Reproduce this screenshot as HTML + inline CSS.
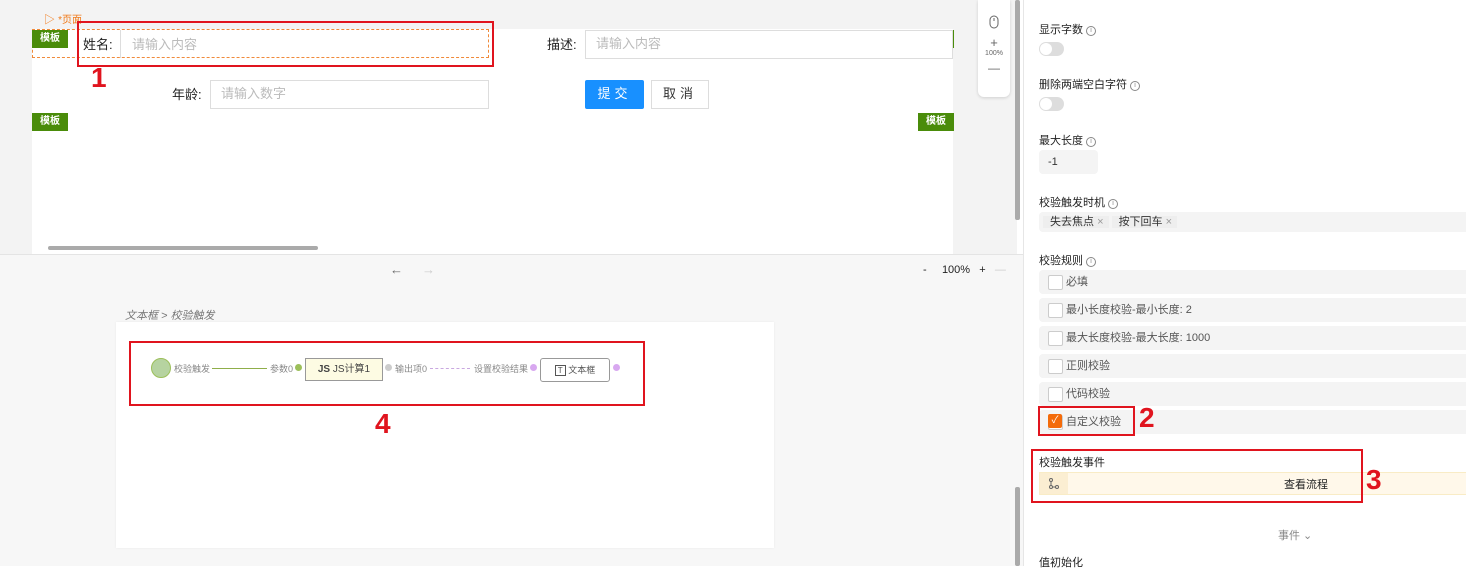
<!DOCTYPE html><html><head><meta charset="utf-8"><style>
*{box-sizing:border-box;margin:0;padding:0}
body{width:1466px;height:566px;overflow:hidden;position:relative;background:#fff;font-family:"Liberation Sans","Noto Sans CJK SC",sans-serif;font-size:12px;color:#333}
.a{position:absolute}
.tag{position:absolute;background:#4a8c0a;color:#fff;font-size:10px;font-weight:bold;width:36px;height:18px;line-height:18px;text-align:center}
.inp{position:absolute;border:1px solid #ddd;background:#fff;color:#bbb;font-size:13px;padding-left:10px;line-height:25px;height:29px}
.red{position:absolute;border:2px solid #e0141e}
.num{position:absolute;color:#e0141e;font-weight:bold;font-size:28px}
.lbl{position:absolute;left:1039px;font-size:11px;color:#222}
.i{display:inline-block;width:10px;height:10px;border:1px solid #888;border-radius:50%;font-size:7px;line-height:8px;text-align:center;color:#888;margin-left:3px;vertical-align:1px}
.sw{position:absolute;left:1039px;width:25px;height:14px;border-radius:7px;background:#ddd}
.sw:after{content:"";position:absolute;left:1px;top:1px;width:12px;height:12px;border-radius:50%;background:#fff}
.row{position:absolute;left:1039px;right:0;height:24px;background:#f4f4f4;border-radius:4px 0 0 4px;font-size:11px;color:#555;line-height:24px;padding-left:27px}
.row:before{content:"";position:absolute;left:9px;top:5px;width:13px;height:13px;border:1px solid #ccc;background:#fff;border-radius:2px}
</style></head><body>
<div class="a" style="left:0;top:0;width:1017px;height:255px;background:#f3f3f3"></div>
<div class="a" style="left:32px;top:29px;width:921px;height:226px;background:#fff"></div>
<div class="a" style="left:44px;top:11px;color:#f07a1a;font-size:11px">▷ <span style="font-size:10px">*页面</span></div>
<div class="a" style="left:32px;top:29px;width:457px;height:29px;border:1px dashed #f08a3a"></div>
<div class="tag" style="left:32px;top:30px">模板</div>
<div class="tag" style="left:918px;top:30px">模板</div>
<div class="tag" style="left:32px;top:113px">模板</div>
<div class="tag" style="left:918px;top:113px">模板</div>
<div class="a" style="left:83px;top:34px;font-size:13px;color:#222">姓名:</div>
<div class="a" style="left:120px;top:30px;width:1px;height:28px;background:#ddd"></div>
<div class="a" style="left:132px;top:34px;font-size:13px;color:#bbb">请输入内容</div>
<div class="a" style="left:547px;top:34px;font-size:13px;color:#222">描述:</div>
<div class="inp" style="left:585px;top:30px;width:368px">请输入内容</div>
<div class="a" style="left:172px;top:84px;font-size:13px;color:#222">年龄:</div>
<div class="inp" style="left:210px;top:80px;width:279px">请输入数字</div>
<div class="a" style="left:585px;top:80px;width:59px;height:29px;background:#1890ff;color:#fff;font-size:13px;text-align:center;line-height:27px;border-radius:2px;letter-spacing:4px">提交</div>
<div class="a" style="left:651px;top:80px;width:58px;height:29px;border:1px solid #ddd;background:#fff;font-size:13px;text-align:center;line-height:25px;letter-spacing:4px">取消</div>
<div class="red" style="left:77px;top:21px;width:417px;height:46px"></div>
<div class="num" style="left:91px;top:62px">1</div>
<div class="a" style="left:978px;top:0;width:32px;height:97px;background:#fff;border-radius:0 0 6px 6px;box-shadow:0 1px 3px rgba(0,0,0,.15);text-align:center;color:#666">
<svg width="10" height="14" style="margin-top:15px" viewBox="0 0 10 14"><rect x="1" y="1" width="8" height="12" rx="4" fill="none" stroke="#666"/><line x1="5" y1="3" x2="5" y2="6" stroke="#666"/></svg>
<div style="font-size:13px;margin-top:4px;line-height:14px">+</div><div style="font-size:7px">100%</div><div style="font-size:12px;margin-top:4px">—</div></div>
<div class="a" style="left:48px;top:246px;width:270px;height:4px;border-radius:2px;background:#aaa"></div>
<div class="a" style="left:1015px;top:0;width:5px;height:220px;background:#aaa;border-radius:2px"></div>
<div class="a" style="left:0;top:254px;width:1023px;height:312px;background:#f7f7f7;border-top:1px solid #e4e4e4"></div>
<div class="a" style="left:390px;top:262px;color:#666;font-size:13px">←</div>
<div class="a" style="left:422px;top:262px;color:#ccc;font-size:13px">→</div>
<div class="a" style="left:923px;top:264px;font-size:11px;color:#222">-&nbsp;&nbsp;&nbsp;&nbsp;&nbsp;100%&nbsp;&nbsp;&nbsp;+&nbsp;&nbsp;&nbsp;<span style="color:#ccc">—</span></div>
<div class="a" style="left:1015px;top:487px;width:5px;height:79px;background:#aaa;border-radius:2px"></div>
<div class="a" style="left:1023px;top:0;width:1px;height:566px;background:#e6e6e6"></div>
<div class="a" style="left:125px;top:307px;font-size:11px;color:#777;font-style:italic">文本框 &gt; 校验触发</div>
<div class="a" style="left:116px;top:322px;width:658px;height:226px;background:#fff;box-shadow:0 0 2px rgba(0,0,0,.06)"></div>
<div class="a" style="left:151px;top:358px;width:20px;height:20px;border-radius:50%;background:#b6d3a0;border:1.5px solid #9cbf5a"></div>
<div class="a" style="left:174px;top:362px;font-size:9px;color:#888">校验触发</div>
<div class="a" style="left:212px;top:368px;width:55px;height:1px;background:#8fae4a"></div>
<div class="a" style="left:270px;top:362px;font-size:9px;color:#888">参数0</div>
<div class="a" style="left:295px;top:364px;width:7px;height:7px;border-radius:50%;background:#9cbf5a"></div>
<div class="a" style="left:305px;top:358px;width:78px;height:23px;background:#fdfbe3;border:1px solid #999;font-size:10px;line-height:21px;text-align:center;color:#444"><b>JS</b> JS计算1</div>
<div class="a" style="left:385px;top:364px;width:7px;height:7px;border-radius:50%;background:#ccc"></div>
<div class="a" style="left:395px;top:362px;font-size:9px;color:#888">输出项0</div>
<div class="a" style="left:430px;top:368px;width:40px;border-top:1px dashed #c9a8e0"></div>
<div class="a" style="left:474px;top:362px;font-size:9px;color:#888">设置校验结果</div>
<div class="a" style="left:530px;top:364px;width:7px;height:7px;border-radius:50%;background:#d8a8f0"></div>
<div class="a" style="left:540px;top:358px;width:70px;height:24px;border:1px solid #999;border-radius:3px;background:#fff;font-size:9px;line-height:22px;text-align:center;color:#555"><span style="border:1px solid #555;padding:0 2px;font-size:8px">T</span> 文本框</div>
<div class="a" style="left:613px;top:364px;width:7px;height:7px;border-radius:50%;background:#d8a8f0"></div>
<div class="red" style="left:129px;top:341px;width:516px;height:65px"></div>
<div class="num" style="left:375px;top:408px">4</div>
<div class="lbl" style="top:21px">显示字数<span class="i">i</span></div>
<div class="sw" style="top:42px"></div>
<div class="lbl" style="top:76px">删除两端空白字符<span class="i">i</span></div>
<div class="sw" style="top:97px"></div>
<div class="lbl" style="top:132px">最大长度<span class="i">i</span></div>
<div class="a" style="left:1039px;top:150px;width:59px;height:24px;background:#f4f4f4;border-radius:4px;font-size:11px;line-height:24px;padding-left:9px">-1</div>
<div class="lbl" style="top:194px">校验触发时机<span class="i">i</span></div>
<div class="a" style="left:1039px;top:212px;right:0;height:20px;background:#f4f4f4;border-radius:4px 0 0 4px;font-size:11px;line-height:20px"><span style="margin-left:4px;background:#eee;padding:0 5px 0 7px;color:#333">失去焦点 <span style="color:#999">×</span></span> <span style="background:#eee;padding:0 5px 0 7px;color:#333">按下回车 <span style="color:#999">×</span></span></div>
<div class="lbl" style="top:252px">校验规则<span class="i">i</span></div>
<div class="row" style="top:270px">必填</div>
<div class="row" style="top:298px">最小长度校验-最小长度: 2</div>
<div class="row" style="top:326px">最大长度校验-最大长度: 1000</div>
<div class="row" style="top:354px">正则校验</div>
<div class="row" style="top:382px">代码校验</div>
<div class="row" style="top:410px">自定义校验</div>
<div class="a" style="left:1048px;top:414px;width:14px;height:14px;background:#f46b0a;border-radius:2px;color:#fff;font-size:10px;text-align:center;line-height:14px">✓</div>
<div class="red" style="left:1038px;top:406px;width:97px;height:30px"></div>
<div class="num" style="left:1139px;top:402px">2</div>
<div class="lbl" style="top:454px">校验触发事件</div>
<div class="a" style="left:1039px;top:472px;right:0;height:23px;background:#fff8ea;border:1px solid #f9ecc6;border-right:0"></div>
<div class="a" style="left:1040px;top:473px;width:28px;height:21px;background:#fbeed2"><svg width="28" height="21" viewBox="0 0 28 21"><circle cx="11" cy="7" r="1.5" fill="none" stroke="#666"/><circle cx="11" cy="14" r="1.5" fill="none" stroke="#666"/><circle cx="17" cy="14" r="1.5" fill="none" stroke="#666"/><path d="M11 8.5V12.5M12.5 14H15.5" stroke="#666" fill="none"/></svg></div>
<div class="a" style="left:1284px;top:476px;font-size:11px;color:#222">查看流程</div>
<div class="red" style="left:1031px;top:449px;width:332px;height:54px"></div>
<div class="num" style="left:1366px;top:464px">3</div>
<div class="a" style="left:1278px;top:527px;font-size:11px;color:#888">事件 ⌄</div>
<div class="lbl" style="top:554px">值初始化</div>
</body></html>
